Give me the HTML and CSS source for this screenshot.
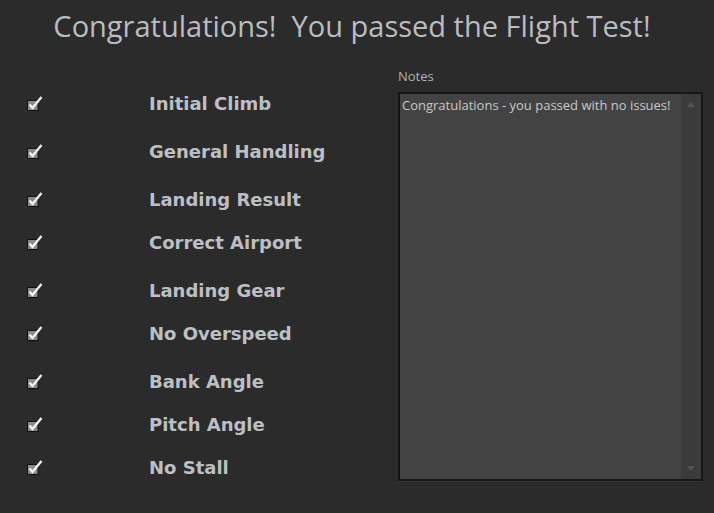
FILE: index.html
```html
<!DOCTYPE html>
<html lang="en">
<head>
    <meta charset="UTF-8">
    <meta name="viewport" content="width=device-width, initial-scale=1.0">
    <title>Flight Test Result</title>
    <link rel="stylesheet" href="styles.css">
</head>
<body>

    <h1 class="title">Congratulations!&nbsp; You passed the Flight Test!</h1>

    <div class="main">
        <!-- check list -->
        <ul class="checks">
            <li class="row"><span class="tick"><svg width="18" height="16" viewBox="0 0 18 16"><rect x="1.5" y="5.5" width="10.5" height="10" fill="#8a8a8a" stroke="#111" /><path d="M3.5 9.5 L6.5 13 L15.5 2" fill="none" stroke="#f4f4f4" stroke-width="2.4" /></svg></span><span class="label">Initial Climb</span></li>
            <li class="row"><span class="tick"><svg width="18" height="16" viewBox="0 0 18 16"><rect x="1.5" y="5.5" width="10.5" height="10" fill="#8a8a8a" stroke="#111" /><path d="M3.5 9.5 L6.5 13 L15.5 2" fill="none" stroke="#f4f4f4" stroke-width="2.4" /></svg></span><span class="label">General Handling</span></li>
            <li class="row tight"><span class="tick"><svg width="18" height="16" viewBox="0 0 18 16"><rect x="1.5" y="5.5" width="10.5" height="10" fill="#8a8a8a" stroke="#111" /><path d="M3.5 9.5 L6.5 13 L15.5 2" fill="none" stroke="#f4f4f4" stroke-width="2.4" /></svg></span><span class="label">Landing Result</span></li>
            <li class="row"><span class="tick"><svg width="18" height="16" viewBox="0 0 18 16"><rect x="1.5" y="5.5" width="10.5" height="10" fill="#8a8a8a" stroke="#111" /><path d="M3.5 9.5 L6.5 13 L15.5 2" fill="none" stroke="#f4f4f4" stroke-width="2.4" /></svg></span><span class="label">Correct Airport</span></li>
            <li class="row tight"><span class="tick"><svg width="18" height="16" viewBox="0 0 18 16"><rect x="1.5" y="5.5" width="10.5" height="10" fill="#8a8a8a" stroke="#111" /><path d="M3.5 9.5 L6.5 13 L15.5 2" fill="none" stroke="#f4f4f4" stroke-width="2.4" /></svg></span><span class="label">Landing Gear</span></li>
            <li class="row"><span class="tick"><svg width="18" height="16" viewBox="0 0 18 16"><rect x="1.5" y="5.5" width="10.5" height="10" fill="#8a8a8a" stroke="#111" /><path d="M3.5 9.5 L6.5 13 L15.5 2" fill="none" stroke="#f4f4f4" stroke-width="2.4" /></svg></span><span class="label">No Overspeed</span></li>
            <li class="row tight"><span class="tick"><svg width="18" height="16" viewBox="0 0 18 16"><rect x="1.5" y="5.5" width="10.5" height="10" fill="#8a8a8a" stroke="#111" /><path d="M3.5 9.5 L6.5 13 L15.5 2" fill="none" stroke="#f4f4f4" stroke-width="2.4" /></svg></span><span class="label">Bank Angle</span></li>
            <li class="row tight"><span class="tick"><svg width="18" height="16" viewBox="0 0 18 16"><rect x="1.5" y="5.5" width="10.5" height="10" fill="#8a8a8a" stroke="#111" /><path d="M3.5 9.5 L6.5 13 L15.5 2" fill="none" stroke="#f4f4f4" stroke-width="2.4" /></svg></span><span class="label">Pitch Angle</span></li>
            <li class="row"><span class="tick"><svg width="18" height="16" viewBox="0 0 18 16"><rect x="1.5" y="5.5" width="10.5" height="10" fill="#8a8a8a" stroke="#111" /><path d="M3.5 9.5 L6.5 13 L15.5 2" fill="none" stroke="#f4f4f4" stroke-width="2.4" /></svg></span><span class="label">No Stall</span></li>
        </ul>

        <!-- notes box -->
        <div class="notes">
            <div class="notes-label">Notes</div>
            <div class="notes-box">
                <div class="notes-text">Congratulations - you passed with no issues!</div>
                <div class="scrollbar">
                    <span class="arrow arrow-up"></span>
                    <span class="arrow arrow-down"></span>
                </div>
            </div>
        </div>
    </div>

</body>
</html>
```

FILE: styles.css
```css
body { margin: 0; background: #2b2b2b; font-family: "Open Sans", sans-serif; width: 714px; height: 513px; overflow: hidden; }
.title { margin: 0; padding-top: 6px; height: 62px; box-sizing: border-box; text-align: center; font-weight: normal; font-size: 29px; color: #b9bdc1; padding-right: 10px; }
.main { display: flex; }
.checks { list-style: none; margin: 0; padding: 21px 0 0 26px; width: 372px; }
.row { display: flex; align-items: center; height: 40px; margin-bottom: 8px; }
.row.tight { margin-bottom: 3px; }
.tick { width: 123px; display: flex; }
.tick svg { display: block; }
.label { font-family: "DejaVu Sans", sans-serif; font-weight: bold; font-size: 18px; color: #bcc0c4; }
.notes { display: flex; flex-direction: column; padding-top: 5px; }
.notes-label { font-size: 13px; color: #b2b2b2; height: 25px; line-height: 18px; }
.notes-box { display: flex; width: 305px; height: 389px; box-sizing: border-box; border: 2px solid #161616; background: #434343; box-shadow: 0 1px 0 #353535; }
.notes-text { flex: 1; padding: 3px 2px; font-size: 13px; line-height: 16px; color: #c9c9c9; }
.scrollbar { width: 20px; background: #3b3b3b; display: flex; flex-direction: column; justify-content: space-between; align-items: center; padding: 8px 0; }
.arrow { width: 0; height: 0; border-left: 4px solid transparent; border-right: 4px solid transparent; }
.arrow-up { border-bottom: 5px solid #555; }
.arrow-down { border-top: 5px solid #555; }
```
